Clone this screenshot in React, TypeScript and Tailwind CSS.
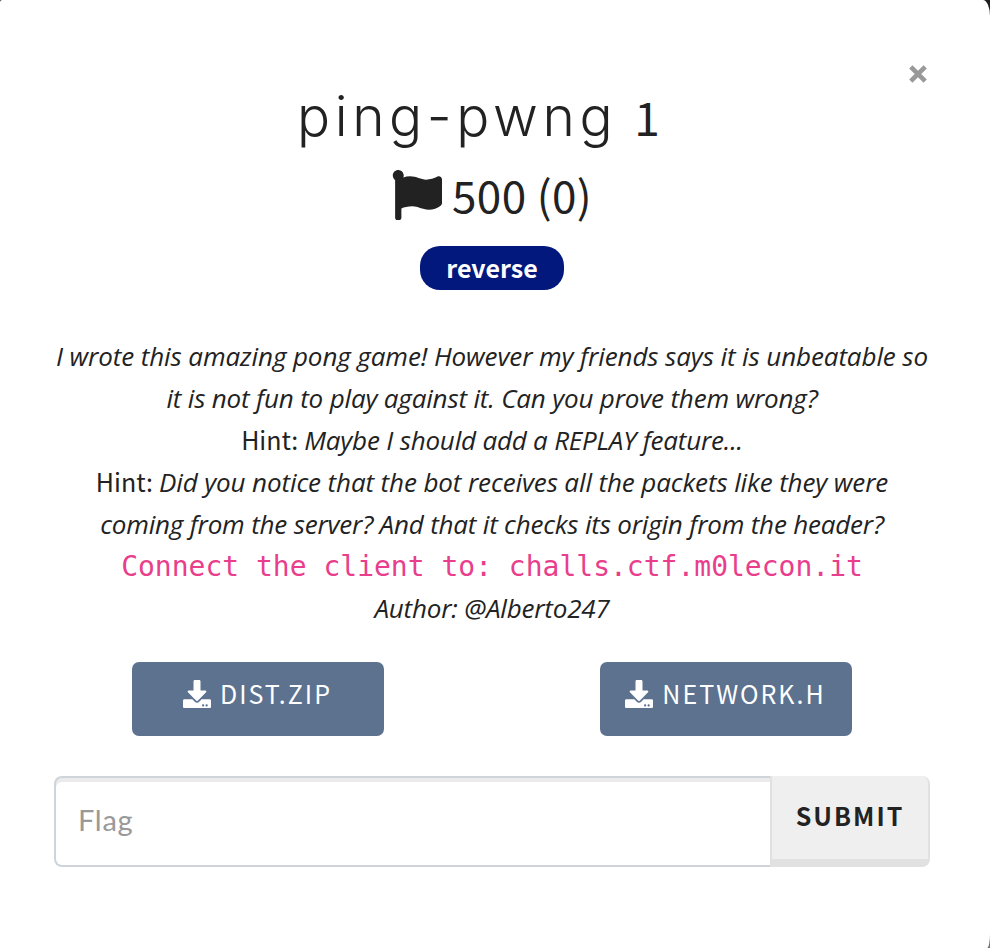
import type { ReactNode } from "react";
import { FaDownload, FaFlag } from "react-icons/fa";

const sans = "font-['Noto_Sans_CJK_SC',sans-serif]";

function Line({ className = "", children }: { className?: string; children: ReactNode }) {
  return <p className={`h-[42px] whitespace-nowrap ${className}`}>{children}</p>;
}

function Hint() {
  return (
    <span className={`${sans} mr-[6px] text-[25px] leading-none tracking-normal not-italic`}>Hint:</span>
  );
}

function FileButton({ name }: { name: string }) {
  return (
    <a
      href="#"
      className={`flex h-[74px] w-[252px] items-start justify-center rounded-[7px] bg-[#5c728f] pt-[16px] text-white ${sans}`}
    >
      <FaDownload className="mt-[1.5px] -ml-px mr-[9px] size-[28px]" />
      <span className="text-[25px] leading-[30px] tracking-[2px]">{name}</span>
    </a>
  );
}

export default function App() {
  return (
    <div className="h-[948px] w-[990px] overflow-hidden bg-linear-to-b from-[#1f1f1f] to-[#707070]">
      <main className="relative flex h-full flex-col rounded-tl-[2px] rounded-tr-[7px_16px] rounded-br-[3px_14px] bg-white pr-[60px] pl-[54px] text-[#222]">
        <button aria-label="Close" className="absolute top-[65px] left-[909px] text-[#999]">
          <svg width="18" height="18" viewBox="0 0 18 18" fill="none" stroke="currentColor" strokeWidth="4.6">
            <path d="M1.8 1.8 16.2 16.2M16.2 1.8 1.8 16.2" />
          </svg>
        </button>

        <h3 className="mt-[81px] flex h-[70px] items-baseline pl-[243px] font-['Inter',sans-serif] text-[55px] leading-[70px] font-light whitespace-nowrap">
          <span className="tracking-[4.6px]">ping-pwng</span>
          <span className={`${sans} ml-[17px] text-[46px] leading-none font-normal`}>1</span>
        </h3>

        <h4 className={`mt-[13px] flex h-[61px] pl-[338px] ${sans} text-[44px] leading-[60px]`}>
          <FaFlag className="mt-[6px] mr-[10px] size-[50px]" />
          <span className="tracking-[0.4px] whitespace-nowrap">500 (0)</span>
        </h4>

        <div className="mt-[21px] flex justify-center">
          <span
            className={`h-[44px] w-[144px] rounded-[20px] bg-[#03187d] text-center ${sans} text-[25px] leading-[42px] font-bold text-white`}
          >
            reverse
          </span>
        </div>

        <section className="mt-[45px] text-center font-['Open_Sans',sans-serif] text-[26px] leading-[42px] italic">
          <Line className="tracking-[-0.1px]">I wrote this amazing pong game! However my friends says it is unbeatable so</Line>
          <Line className="tracking-[-0.17px]">it is not fun to play against it. Can you prove them wrong?</Line>
          <Line className="tracking-[-0.2px]">
            <Hint />
            Maybe I should add a REPLAY feature...
          </Line>
          <Line className="tracking-[-0.11px]">
            <Hint />
            Did you notice that the bot receives all the packets like they were
          </Line>
          <Line className="tracking-[-0.19px]">coming from the server? And that it checks its origin from the header?</Line>
          <Line>
            <code className="font-['DejaVu_Sans_Mono',monospace] text-[28px] leading-none text-[#e83e8c] not-italic">
              Connect the client to: challs.ctf.m0lecon.it
            </code>
          </Line>
          <Line className="tracking-[-0.2px]">Author: @Alberto247</Line>
        </section>

        <div className="mt-[33px] flex gap-[216px] pl-[78px]">
          <FileButton name="DIST.ZIP" />
          <FileButton name="NETWORK.H" />
        </div>

        <form className="mt-[40px] flex h-[91px]">
          <input
            placeholder="Flag"
            className="w-[716px] rounded-l-[8px] border-2 border-r-0 border-[#ced4da] pb-[4px] pl-[22px] font-['Lato',sans-serif] text-[29px] tracking-[0.7px] shadow-[inset_0_4px_0_#ebebeb] placeholder:text-[#999]"
          />
          <button
            type="button"
            className={`w-[160px] rounded-r-[8px] border-r-2 border-b-8 border-l-2 border-[#e1e1e1] bg-[#efefef] pb-[5px] text-center ${sans} text-[25px] leading-[30px] font-bold tracking-[2px]`}
          >
            SUBMIT
          </button>
        </form>
      </main>
    </div>
  );
}
